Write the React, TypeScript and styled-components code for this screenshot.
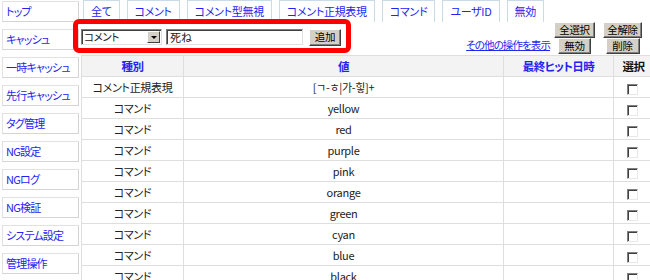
import styled, { createGlobalStyle } from 'styled-components'

const GlobalStyle = createGlobalStyle`
  html, body {
    margin: 0;
    padding: 0;
    background: #fff;
    overflow: hidden;
  }
  body {
    font-family: "Noto Sans CJK JP", "DejaVu Sans", sans-serif;
    font-size: 12px;
    font-feature-settings: "palt";
    color: #222;
  }
`

const Page = styled.div`
  display: flex;
  gap: 2px;
  width: 650px;
  height: 280px;
  overflow: hidden;
`

const Sidebar = styled.nav`
  display: flex;
  flex-direction: column;
  gap: 7px;
  padding: 1px 0 0 2px;
  width: 77px;
  flex-shrink: 0;
`

const SideItem = styled.a`
  display: block;
  height: 19px;
  line-height: 19px;
  padding-left: 3px;
  border: 1px solid #e2e2e2;
  border-right-color: #d4d4d4;
  border-bottom-color: #d4d4d4;
  color: #2424f0;
  font-size: 11px;
  letter-spacing: -0.8px;
  text-decoration: none;
  white-space: nowrap;
  overflow: hidden;
`

const Main = styled.div`
  flex: 1;
  display: flex;
  flex-direction: column;
  min-width: 0;
`

const Tabs = styled.div`
  display: flex;
  gap: 7px;
  padding-left: 2px;
  height: 22px;
`

const Tab = styled.a`
  display: block;
  height: 21px;
  line-height: 21px;
  padding: 0 7px;
  border: 1px solid #c9dbe6;
  border-bottom: none;
  color: #2424f0;
  font-size: 11px;
  letter-spacing: -0.3px;
  text-decoration: none;
  white-space: nowrap;
`

const Controls = styled.div`
  position: relative;
  display: flex;
  justify-content: space-between;
  height: 33px;
`

const AddForm = styled.div`
  position: relative;
  display: flex;
  align-items: center;
  gap: 4px;
  padding: 7px 0 0 0;
  height: 16px;
`

const Select = styled.div`
  display: flex;
  align-items: center;
  width: 78px;
  height: 14px;
  border: 1px solid #7f7f7f;
  border-right-color: #e0e0e0;
  border-bottom-color: #e0e0e0;
  box-shadow: inset 1px 1px 0 #404040;
  font-size: 10.5px;
  letter-spacing: -0.4px;
  line-height: 14px;
  padding-left: 1px;
  background: #fff;
`

const SelectLabel = styled.span`
  flex: 1;
  padding-left: 1px;
`

const SelectArrow = styled.span`
  width: 13px;
  height: 12px;
  margin-right: 1px;
  background: #d4d0c8;
  border: 1px solid #fff;
  border-right-color: #404040;
  border-bottom-color: #404040;
  box-sizing: border-box;
  display: flex;
  align-items: center;
  justify-content: center;
  &::after {
    content: '';
    border-left: 3px solid transparent;
    border-right: 3px solid transparent;
    border-top: 3px solid #000;
  }
`

const TextInput = styled.div`
  width: 132px;
  height: 14px;
  border: 1px solid #7f7f7f;
  border-right-color: #e0e0e0;
  border-bottom-color: #e0e0e0;
  box-shadow: inset 1px 1px 0 #404040;
  padding-left: 3px;
  font-size: 11px;
  line-height: 14px;
  background: #fff;
`

const Button = styled.button<{ $w: number; $col?: number; $row?: number }>`
  grid-column: ${(p) => p.$col ?? 'auto'};
  grid-row: ${(p) => p.$row ?? 'auto'};
  width: ${(p) => p.$w}px;
  height: 16px;
  padding: 0;
  background: #d4d0c8;
  border: 1px solid #fff;
  border-right-color: #404040;
  border-bottom-color: #404040;
  box-shadow: inset -1px -1px 0 #808080;
  font-family: "Noto Sans CJK JP", sans-serif;
  font-feature-settings: "palt";
  font-size: 10.5px;
  letter-spacing: -0.3px;
  line-height: 14px;
  color: #000;
`

const AddButton = styled(Button)`
  margin-left: 2px;
  height: 17px;
`

const Highlight = styled.div`
  position: absolute;
  left: -8px;
  top: -3px;
  width: 268px;
  height: 24px;
  border: 5px solid #ff0000;
  border-radius: 6px;
  pointer-events: none;
`

const Actions = styled.div`
  display: grid;
  grid-template-columns: auto 49px 47px;
  grid-template-rows: 16px 17px;
  align-items: start;
  justify-items: center;
  padding-right: 4px;
`

const MoreLink = styled.a`
  grid-column: 1;
  grid-row: 2;
  justify-self: end;
  margin-top: 1px;
  margin-right: 0;
  color: #2424f0;
  font-size: 10.5px;
  letter-spacing: -0.9px;
  line-height: 12px;
  text-decoration: underline;
`

const Table = styled.table`
  border-collapse: collapse;
  width: 572px;
  table-layout: fixed;
  font-size: 11px;
`

const Th = styled.th<{ $link?: boolean }>`
  height: 20px;
  padding: 0;
  background: #f3f3f3;
  border: 1px solid #dedede;
  font-weight: bold;
  font-size: 11.5px;
  letter-spacing: -0.6px;
  color: ${(p) => (p.$link ? '#2424f0' : '#111')};
  text-align: center;
`

const Td = styled.td`
  height: 20px;
  padding: 0;
  border: 1px solid #dedede;
  text-align: center;
  color: #222;
  letter-spacing: -0.3px;
  white-space: nowrap;
`

const Check = styled.span`
  display: inline-block;
  width: 9px;
  height: 9px;
  margin: 2px 0 0 -3px;
  border: 1px solid #808080;
  border-right-color: #e8e8e8;
  border-bottom-color: #e8e8e8;
  box-shadow: inset 1px 1px 0 #404040;
  background: #fff;
  vertical-align: middle;
`

const menu = [
  'トップ',
  'キャッシュ',
  '一時キャッシュ',
  '先行キャッシュ',
  'タグ管理',
  'NG設定',
  'NGログ',
  'NG検証',
  'システム設定',
  '管理操作',
]

const tabs = ['全て', 'コメント', 'コメント型無視', 'コメント正規表現', 'コマンド', 'ユーザID', '無効']

const rows: [string, string][] = [
  ['コメント正規表現', '[ㄱ-ㅎ|가-힣]+'],
  ['コマンド', 'yellow'],
  ['コマンド', 'red'],
  ['コマンド', 'purple'],
  ['コマンド', 'pink'],
  ['コマンド', 'orange'],
  ['コマンド', 'green'],
  ['コマンド', 'cyan'],
  ['コマンド', 'blue'],
  ['コマンド', 'black'],
]

export default function App() {
  return (
    <Page>
      <GlobalStyle />
      <Sidebar>
        {menu.map((m) => (
          <SideItem key={m} href="#">
            {m}
          </SideItem>
        ))}
      </Sidebar>
      <Main>
        <Tabs>
          {tabs.map((t) => (
            <Tab key={t} href="#">
              {t}
            </Tab>
          ))}
        </Tabs>
        <Controls>
          <AddForm>
            <Select>
              <SelectLabel>コメント</SelectLabel>
              <SelectArrow />
            </Select>
            <TextInput>死ね</TextInput>
            <AddButton $w={32}>追加</AddButton>
            <Highlight />
          </AddForm>
          <Actions>
            <Button $w={41} $col={2} $row={1}>全選択</Button>
            <Button $w={39} $col={3} $row={1}>全解除</Button>
            <MoreLink href="#">その他の操作を表示</MoreLink>
            <Button $w={33} $col={2} $row={2}>無効</Button>
            <Button $w={34} $col={3} $row={2}>削除</Button>
          </Actions>
        </Controls>
        <Table>
          <colgroup>
            <col style={{ width: 102 }} />
            <col style={{ width: 320 }} />
            <col style={{ width: 110 }} />
            <col style={{ width: 40 }} />
          </colgroup>
          <thead>
            <tr>
              <Th $link>種別</Th>
              <Th $link>値</Th>
              <Th $link>最終ヒット日時</Th>
              <Th>選択</Th>
            </tr>
          </thead>
          <tbody>
            {rows.map(([kind, value], i) => (
              <tr key={i}>
                <Td>{kind}</Td>
                <Td>{value}</Td>
                <Td />
                <Td>
                  <Check />
                </Td>
              </tr>
            ))}
          </tbody>
        </Table>
      </Main>
    </Page>
  )
}
